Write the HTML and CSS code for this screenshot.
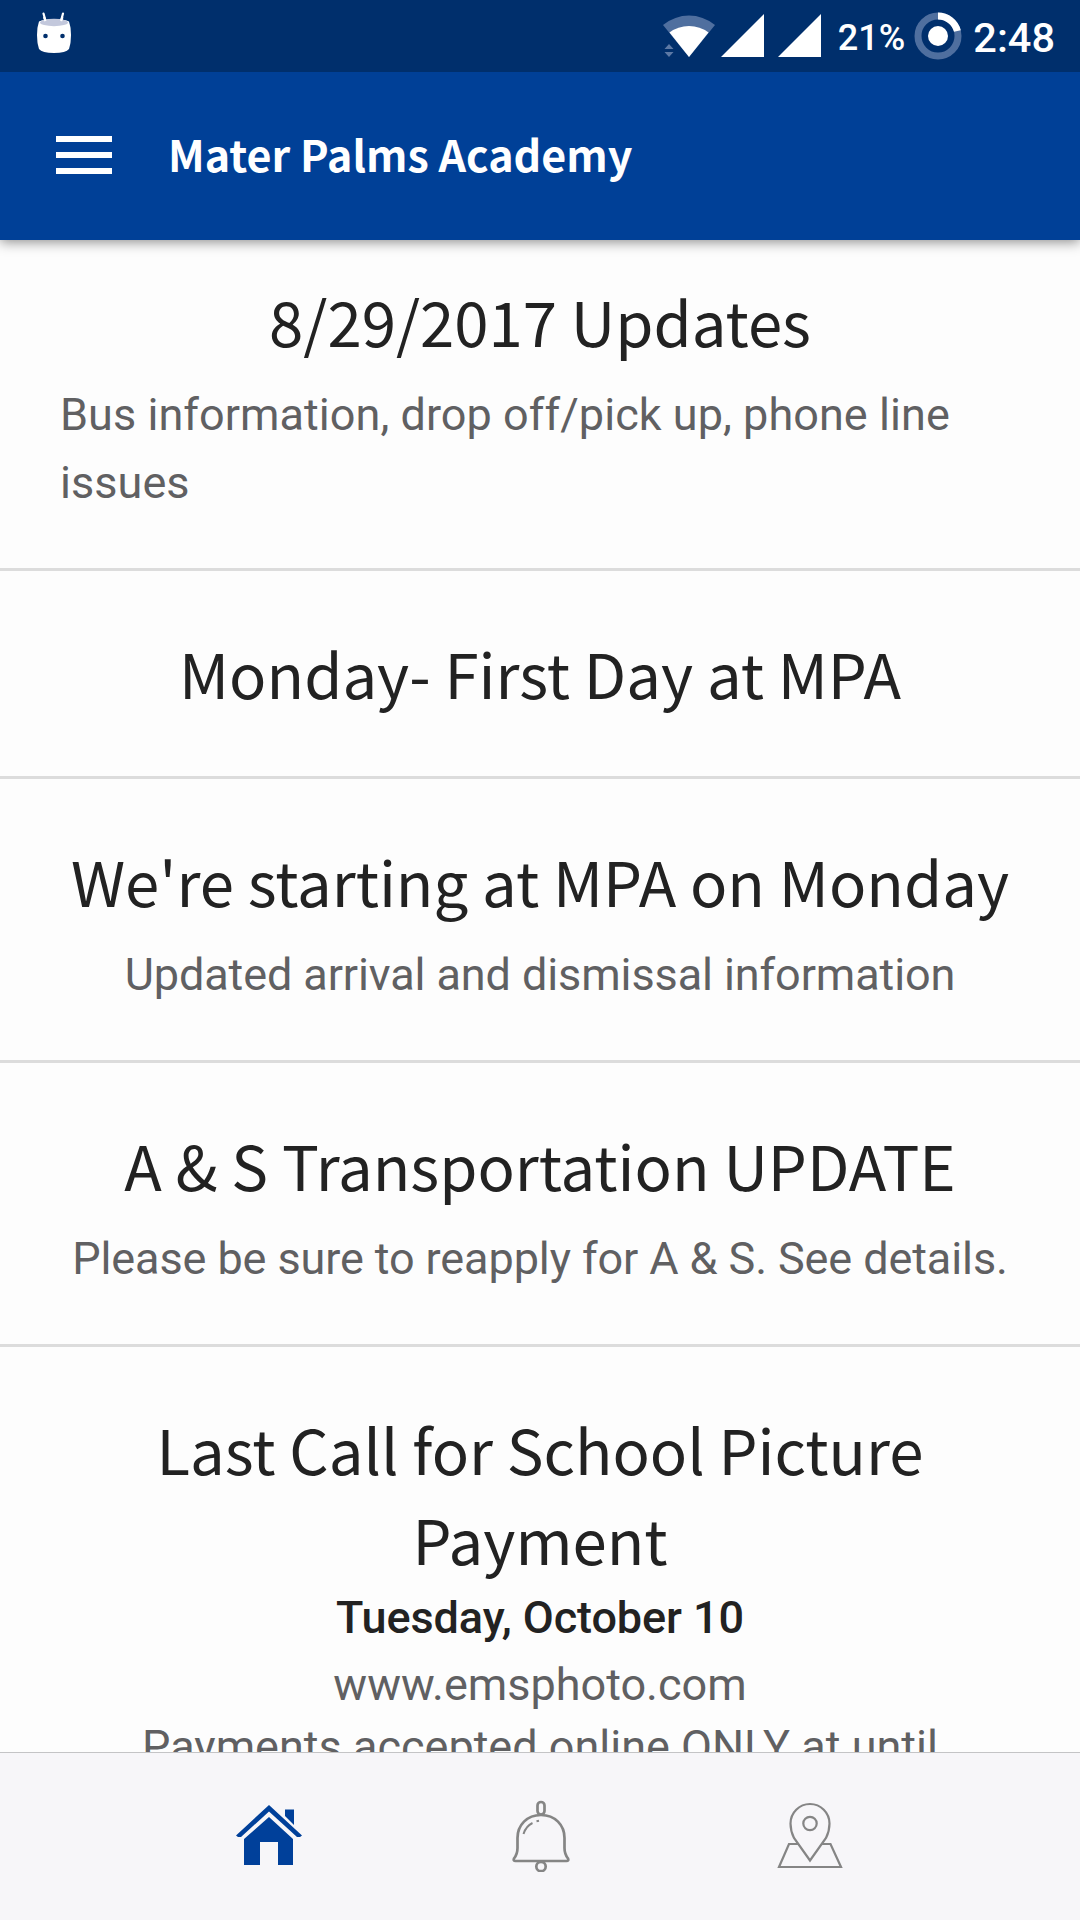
FILE: index.html
```html
<!DOCTYPE html>
<html lang="en">
<head>
    <meta charset="UTF-8">
    <meta name="viewport" content="width=device-width, initial-scale=1.0">
    <title>Mater Palms Academy</title>
    <link rel="stylesheet" href="styles.css">
</head>
<body>
    <div class="status-bar">
        <svg class="robot" width="36" height="42" viewBox="0 0 36 42">
            <path d="M7.500 1.500 9.500 9M27 1.500 25 9" stroke="#fff" stroke-width="2.200" stroke-linecap="round"/>
            <path d="M3 9.500Q1 15 1 23t2 14q3 4 15 4t15-4q2-6 2-14T33 9.500Q29 7 18 7T3 9.500z" fill="#fff"/>
            <ellipse cx="18" cy="10.500" rx="14" ry="3.700" fill="#c3c8dc"/>
            <path d="M8 5 9.500 9M26.500 5 25 9" stroke="#fff" stroke-width="2.200"/>
            <circle cx="9.500" cy="24" r="2.300" fill="#002f6c"/>
            <circle cx="26.500" cy="24" r="2.300" fill="#002f6c"/>
        </svg>
        <div class="status-icons">
            <svg class="wifi" width="54" height="44" viewBox="0 0 54 44">
                <path d="M1 11Q13 1.500 27 1.500T53 11L27 43z" fill="#4f6f9f"/>
                <path d="M7.500 18.500Q16 12 27 12T46.500 18.500L27 43z" fill="#fff"/>
                <path d="M2.500 35h9L7 30zM2.500 38h9L7 43z" fill="#5c79a5"/>
            </svg>
            <svg class="signal" width="43" height="43" viewBox="0 0 43 43"><path d="M43 0v43H0z" fill="#fff"/></svg>
            <svg class="signal-2" width="43" height="43" viewBox="0 0 43 43"><path d="M43 0v43H0z" fill="#fff"/></svg>
            <span class="percent">21%</span>
            <svg class="battery" width="48" height="48" viewBox="0 0 48 48">
                <circle cx="24" cy="24" r="20" fill="none" stroke="#4f6f9f" stroke-width="7"/>
                <path d="M24 4A20 20 0 0 1 43.400 19" fill="none" stroke="#fff" stroke-width="7"/>
                <circle cx="24" cy="24" r="10" fill="#fff"/>
            </svg>
            <span class="clock">2:48</span>
        </div>
    </div>

    <header class="toolbar">
        <div class="menu">
            <span></span>
            <span></span>
            <span></span>
        </div>
        <h1>Mater Palms Academy</h1>
    </header>

    <main class="news">
        <div class="item first">
            <h2>8/29/2017 Updates</h2>
            <p class="left">Bus information, drop off/pick up, phone line issues</p>
        </div>
        <div class="item">
            <h2>Monday- First Day at MPA</h2>
        </div>
        <div class="item">
            <h2>We're starting at MPA on Monday</h2>
            <p>Updated arrival and dismissal information</p>
        </div>
        <div class="item">
            <h2>A &amp; S Transportation UPDATE</h2>
            <p>Please be sure to reapply for A &amp; S. See details.</p>
        </div>
        <div class="item">
            <h2>Last Call for School Picture Payment</h2>
            <p class="date">Tuesday, October 10</p>
            <p class="link">www.emsphoto.com</p>
            <p class="more">Payments accepted online ONLY at until</p>
        </div>
    </main>

    <nav class="tabs">
        <a class="tab home">
            <svg width="68" height="62" viewBox="0 0 68 62">
                <path d="M34 12 58 34V60H43V37H25V60H9V34z" fill="#00409a"/>
                <path d="M3 31.500 34 3.500 65 31.500" fill="none" stroke="#f7f6f9" stroke-width="10"/>
                <path d="M50 4.500h9V20l-9-9z" fill="#00409a"/>
                <path d="M1 30.500 34 0 67 30.500 65 32H62L34 6.500 6 32H3z" fill="#00409a"/>
            </svg>
        </a>
        <a class="tab bell">
            <svg width="58" height="72" viewBox="0 0 58 72" fill="none" stroke="#858585" stroke-width="2.700">
                <rect x="25.500" y="2" width="7" height="12.500" rx="3.500"/>
                <path d="M29 15C15 15 5.500 25 5.500 38V48Q5.500 54 2 58.500Q1 61 3.500 61H54.500Q57 61 56 58.500Q52.500 54 52.500 48V38C52.500 25 43 15 29 15z"/>
                <circle cx="29" cy="66.500" r="4.700"/>
                <path d="M11.500 34Q14 26 20.500 23M24.500 21.300 27 20.800" stroke-width="2"/>
            </svg>
        </a>
        <a class="tab">
            <svg width="66" height="68" viewBox="0 0 66 68" fill="none" stroke="#858585" stroke-width="2.200">
                <path d="M33 58.500 17 36Q13.500 29 13.500 21.500A19.500 19.500 0 0 1 52.500 21.500Q52.500 29 49 36z"/>
                <circle cx="33" cy="21.500" r="6.700"/>
                <path d="M22 42H12L2 65H64L53.500 42H44"/>
            </svg>
        </a>
    </nav>
</body>
</html>
```

FILE: styles.css
```css
* {
    box-sizing: border-box;
}
body {
    margin: 0;
    height: 1920px;
    display: flex;
    flex-direction: column;
    overflow: hidden;
    background-color: #fdfdfd;
    font-family: Roboto, sans-serif;
}
h1, h2, p {
    margin: 0;
}
svg {
    display: block;
    flex: none;
}
.status-bar {
    position: relative;
    z-index: 1;
    height: 72px;
    flex: none;
    display: flex;
    justify-content: space-between;
    align-items: flex-start;
    padding: 12px 25px 0 36px;
    background-color: #002f6c;
    color: #fff;
}
.status-icons {
    display: flex;
}
.wifi {
    margin-top: 2px;
}
.signal {
    margin: 2px 0 0 5px;
}
.signal-2 {
    margin: 2px 0 0 14px;
}
.percent {
    margin-left: 17px;
    font-size: 36px;
    font-weight: 500;
    line-height: 52px;
}
.battery {
    margin-left: 9px;
}
.clock {
    margin-left: 11px;
    font-size: 41.5px;
    font-weight: 500;
    line-height: 52px;
}
.toolbar {
    position: relative;
    height: 168px;
    flex: none;
    display: flex;
    align-items: center;
    padding: 0 0 2px 56px;
    background-color: #004097;
    color: #fff;
    box-shadow: 0 2px 12px rgba(0, 0, 0, 0.45);
}
.menu {
    width: 56px;
    display: flex;
    flex-direction: column;
    gap: 10px;
    margin-right: 56px;
}
.menu span {
    height: 6px;
    background-color: #fff;
}
.toolbar h1 {
    margin-bottom: 4px;
    font-family: "Noto Sans CJK SC", sans-serif;
    font-size: 43px;
    font-weight: 700;
    line-height: 60px;
}
.news {
    flex: 1;
    min-height: 0;
    overflow: hidden;
}
.item {
    padding: 56px 50px 51px;
    border-bottom: 3px solid #dcdcdc;
    text-align: center;
}
.item.first {
    padding-top: 35px;
}
.item h2 {
    color: #222;
    font-family: "Noto Sans CJK SC", sans-serif;
    font-size: 61.7px;
    font-weight: 400;
    line-height: 90px;
}
.item h2:only-child {
    margin-bottom: 8px;
}
.item p {
    margin-top: 16px;
    color: #606062;
    font-size: 45px;
    line-height: 68px;
    letter-spacing: -0.1px;
}
.item .left {
    padding: 0 10px;
    text-align: left;
    letter-spacing: 0.05px;
}
.item .date {
    margin-top: 1px;
    color: #222;
    font-weight: 500;
}
.item .link {
    margin-top: -1px;
    letter-spacing: 0;
}
.item .more {
    margin-top: -6px;
    letter-spacing: 0;
}
.tabs {
    height: 168px;
    flex: none;
    display: flex;
    justify-content: center;
    padding-bottom: 2px;
    border-top: 1px solid #c4c4c6;
    background-color: #f7f6f9;
}
.tab {
    width: 270px;
    display: flex;
    justify-content: center;
    align-items: center;
}
.home {
    padding: 0 3px 0 0;
}
.bell {
    padding-left: 2px;
}
```
